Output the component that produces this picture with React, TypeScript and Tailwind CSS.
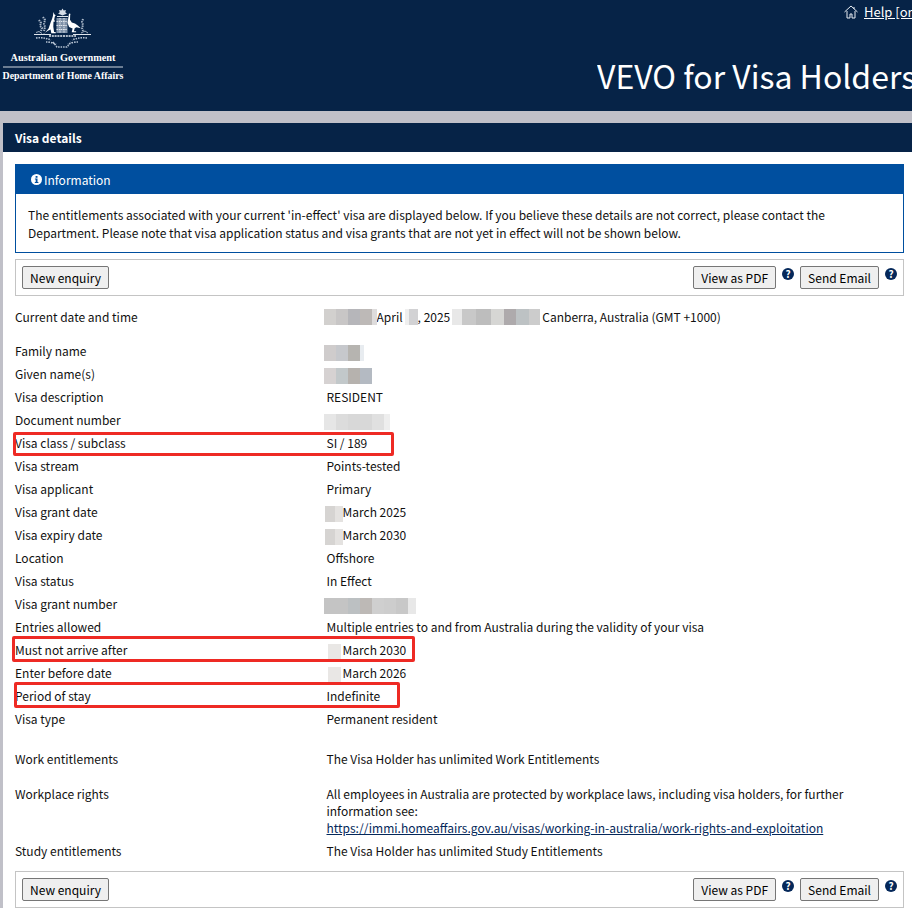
import { ReactNode } from "react";

type Segment = [number, string];

// pixelated smears that hide personal details in the screenshot
function Smear({ segments, className = "" }: { segments: Segment[]; className?: string }) {
    return (
        <span className={`inline-flex h-[16px] align-middle blur-[0.6px] ${className}`}>
            {segments.map(([width, color], index) => (
                <span key={index} className="h-full" style={{ width, backgroundColor: color }} />
            ))}
        </span>
    );
}

function Coat() {
    return (
        <svg width="60" height="42" viewBox="0 0 60 42" fill="none" className="block">
            {/* star and crest */}
            <path d="M29.5 1.5l1.2 2 2.2-.4-.6 2.2 1.6 1.5-2.2.7-2.2 1-2.2-1-2.2-.7 1.6-1.5-.6-2.2 2.2.4z" fill="#d5dce6" />
            <rect x="24" y="9" width="11" height="1" fill="#dfe5ec" />
            {/* shield */}
            <rect x="23.5" y="11" width="11" height="15" fill="#7f91a8" />
            <path d="M23.5 14.5h11M23.5 18.5h11M23.5 22.5h11M27 11v15M31 11v15" stroke="#eef2f6" strokeWidth="0.9" strokeDasharray="1.4 0.8" />
            {/* kangaroo */}
            <path d="M20.5 5l.8 2.2 1.4 1-.9 1.3-.6 3.2.9 1.7-1.6.4-.2 5 .8 5.2h1.6v1.2h-4.4l-.7-3.8-2.7 1.4-4.6 3.2H11l4.6-5.4 2-6 1.5-3.8.8-2.8z" fill="#ffffff" />
            {/* emu */}
            <path d="M36 6.5l1.8.4-.6.7-.2 5.2 1.8 2.6 3.2 1 2.8 2.2 3 2.6-4.4-1-1.7 1-.8 3h2.2v1h-4.4l.9-3.7-3.5-1.4-1.6-4.4z" fill="#ffffff" />
            {/* wattle beside the supporters */}
            <path
                d="M6 13l2 3-1 3 2 2-1 3M10 10l2 3-1 4 1 3-1 4M50 12l-1 3 1 3-1 3 1 3"
                stroke="#a9b7c8"
                strokeWidth="2"
                strokeDasharray="1.4 0.9"
            />
            {/* ground line */}
            <path d="M1 27.5h17M40 27.5h18" stroke="#dfe5ec" strokeWidth="1" />
            <path d="M3 25.5l3-1 3 2M48 26l4-2 3 2" stroke="#c3cedb" strokeWidth="0.8" />
            <path d="M16 29h27" stroke="#e6ebf1" strokeWidth="1.6" strokeDasharray="2 0.8" />
            {/* wattle under the arms */}
            <path
                d="M3 31c5-.6 10 0 15 2M54 31c-5-.6-10 0-15 2M13 35c3 0 7 .5 10 2.5M45 35c-3 0-7 .5-10 2.5M20 35l4 5h10l4-5"
                stroke="#b5c2d2"
                strokeWidth="1.6"
                strokeDasharray="1.5 1"
            />
        </svg>
    );
}

function Help() {
    return (
        <span className="mb-[7px] ml-[6px] flex h-[12px] w-[12px] items-center justify-center rounded-full bg-[#05285a] text-[10px] font-bold leading-none text-white">
            ?
        </span>
    );
}

function Btn({ children }: { children: ReactNode }) {
    return (
        <button className="h-[23px] rounded-[2px] border border-[#767676] bg-[#efefef] px-[7px] text-[12px] leading-none text-black">
            {children}
        </button>
    );
}

function Toolbar({ className = "" }: { className?: string }) {
    return (
        <div className={`mr-[8px] flex h-[37px] items-center justify-between border border-[#c4c4c4] pl-[6px] pr-[6px] ${className}`}>
            <Btn>New enquiry</Btn>
            <div className="flex items-center">
                <Btn>View as PDF</Btn>
                <Help />
                <span className="w-[6px]" />
                <Btn>Send Email</Btn>
                <Help />
            </div>
        </div>
    );
}

function Row({ label, children, className = "", mark }: { label: string; children: ReactNode; className?: string; mark?: string }) {
    return (
        <div className={`relative flex min-h-[23px] items-start leading-[23px] ${className}`}>
            <div className="w-[311.5px] shrink-0">{label}</div>
            <div>{children}</div>
            {mark && <div className={`absolute rounded-[2px] border-[3px] border-[#ee2a24] ${mark}`} />}
        </div>
    );
}

const DAY_A: Segment[] = [[10, "#d6d4d2"], [8, "#e4e2e0"]];

export default function App() {
    return (
        <div className="h-[914px] w-[912px] overflow-hidden bg-white text-[12px] text-[#111] [font-family:'Noto_Sans_CJK_SC','Noto_Sans',sans-serif]">
            <header className="relative flex h-[111px] bg-[#062347] text-white">
                <div className="flex w-[126px] flex-col items-center pt-[7px]">
                    <Coat />
                    <div className="mt-[2px] w-[120px] border-b-2 border-[#6b7d93] pb-[1px] text-center text-[10.3px] font-bold leading-[14px] whitespace-nowrap [font-family:'Liberation_Serif',serif]">
                        Australian Government
                    </div>
                    <div className="mt-[1px] text-[9.9px] font-bold leading-[14px] whitespace-nowrap [font-family:'Liberation_Serif',serif]">
                        Department of Home Affairs
                    </div>
                </div>
                <div className="flex min-w-0 flex-1 flex-col items-end">
                    <div className="mt-[2px] flex w-[68px] items-center overflow-hidden whitespace-nowrap text-[13px] leading-[20px]">
                        <svg width="14" height="14" viewBox="0 0 14 14" fill="none" stroke="#e8edf3" strokeWidth="1" className="mr-[6px] shrink-0">
                            <path d="M0.5 7L7 1l6.5 6M3 6v7h3V9h2v4h3V6M10 2v2" />
                        </svg>
                        <span className="underline">Help [online]</span>
                    </div>
                    <div className="mt-[30px] w-[315px] overflow-hidden whitespace-nowrap text-[32px] leading-[46px]">
                        VEVO for Visa Holders
                    </div>
                </div>
            </header>
            <div className="h-[12px] bg-[#c0c0c8]" />
            <main className="border-l-[3px] border-[#c0c0c8]">
                <div className="flex h-[29px] items-center bg-[#062347] pl-[12px] font-bold text-white">Visa details</div>
                <div className="pl-[12px]">
                    <section className="mr-[8px] mt-[12px] border border-[#004f9f]">
                        <div className="flex h-[29px] items-center gap-[2px] bg-[#004f9f] pl-[15px] text-white">
                            <svg width="11" height="11" viewBox="0 0 11 11" className="shrink-0">
                                <circle cx="5.5" cy="5.5" r="5.5" fill="#fff" />
                                <rect x="4.6" y="2" width="1.9" height="1.8" fill="#004f9f" />
                                <path d="M3.9 4.6h2.6v3.4h.9v1H3.8V8h.9V5.6h-.8z" fill="#004f9f" />
                            </svg>
                            Information
                        </div>
                        <p className="px-[12px] pb-[10px] pt-[12px] leading-[18px]">
                            The entitlements associated with your current 'in-effect' visa are displayed below. If you believe these details are not correct, please contact the
                            Department. Please note that visa application status and visa grants that are not yet in effect will not be shown below.
                        </p>
                    </section>
                    <Toolbar className="mt-[6px]" />
                    <div className="mt-[9px]">
                        <Row label="Current date and time" className="mb-[11px]">
                            <span className="flex h-[23px] items-center whitespace-nowrap">
                                <Smear segments={[[12, "#d2d0ce"], [12, "#c8c6c6"], [12, "#b6b6ba"], [12, "#bdb9b7"], [5, "#dedcdc"]]} className="-ml-[3px]" />
                                April
                                <Smear segments={[[4, "#efefef"], [9, "#d2d2d4"]]} className="ml-[2px]" />
                                , 2025
                                <Smear segments={[[10, "#e8e8e8"], [14, "#c8c8c8"], [15, "#bdbdbd"], [13, "#d6d6d4"], [12, "#aeaaac"], [13, "#bdc2c4"], [11, "#cccccc"]]} className="mx-[2px]" />
                                Canberra, Australia (GMT +1000)
                            </span>
                        </Row>
                        <Row label="Family name">
                            <Smear segments={[[12, "#cfcccc"], [12, "#c6c8cc"], [12, "#b6b4b0"], [4, "#e8ecf0"]]} className="-ml-[3px]" />
                        </Row>
                        <Row label="Given name(s)">
                            <Smear segments={[[12, "#d6d2d2"], [12, "#c2c8ca"], [12, "#b6b2ae"], [12, "#b4bac2"]]} className="-ml-[3px]" />
                        </Row>
                        <Row label="Visa description">RESIDENT</Row>
                        <Row label="Document number">
                            <Smear segments={[[12, "#e6e6e6"], [12, "#dcdcdc"], [12, "#d8d8d8"], [12, "#d8d8d8"], [12, "#e0e0e0"], [6, "#eeeeee"]]} className="-ml-[3px]" />
                        </Row>
                        <Row label="Visa class / subclass" mark="left-[-2px] top-[1px] h-[24px] w-[381px]">SI / 189</Row>
                        <Row label="Visa stream">Points-tested</Row>
                        <Row label="Visa applicant">Primary</Row>
                        <Row label="Visa grant date">
                            <Smear segments={DAY_A} className="-ml-[2px]" /><span>March 2025</span>
                        </Row>
                        <Row label="Visa expiry date">
                            <Smear segments={DAY_A} className="-ml-[2px]" /><span>March 2030</span>
                        </Row>
                        <Row label="Location">Offshore</Row>
                        <Row label="Visa status">In Effect</Row>
                        <Row label="Visa grant number">
                            <Smear segments={[[24, "#c4c4c4"], [12, "#bcc0c2"], [12, "#bdb9b6"], [12, "#cfcfcf"], [12, "#cdcdcd"], [12, "#c8c8c8"], [8, "#e8e8e8"]]} className="-ml-[3px]" />
                        </Row>
                        <Row label="Entries allowed">Multiple entries to and from Australia during the validity of your visa</Row>
                        <Row label="Must not arrive after" mark="left-[-3px] top-[-2px] h-[26px] w-[403px]">
                            <Smear segments={[[13, "#e9e7e5"]]} className="ml-[1px]" /><span className="ml-[2px]">March 2030</span>
                        </Row>
                        <Row label="Enter before date">
                            <Smear segments={[[13, "#e9e7e5"]]} className="ml-[1px]" /><span className="ml-[2px]">March 2026</span>
                        </Row>
                        <Row label="Period of stay" mark="left-[-1px] top-[-2px] h-[26px] w-[386px]">Indefinite</Row>
                        <Row label="Visa type" className="mb-[17px]">Permanent resident</Row>
                        <Row label="Work entitlements" className="mb-[15px]">The Visa Holder has unlimited Work Entitlements</Row>
                        <div className="flex leading-[17px]">
                            <div className="w-[311.5px] shrink-0">Workplace rights</div>
                            <div className="w-[560px]">
                                All employees in Australia are protected by workplace laws, including visa holders, for further information see:
                                <br />
                                <a className="text-[#05285a] underline">https://immi.homeaffairs.gov.au/visas/working-in-australia/work-rights-and-exploitation</a>
                            </div>
                        </div>
                        <Row label="Study entitlements" className="mt-[3px]">The Visa Holder has unlimited Study Entitlements</Row>
                    </div>
                    <Toolbar className="mt-[9px]" />
                </div>
            </main>
        </div>
    );
}
